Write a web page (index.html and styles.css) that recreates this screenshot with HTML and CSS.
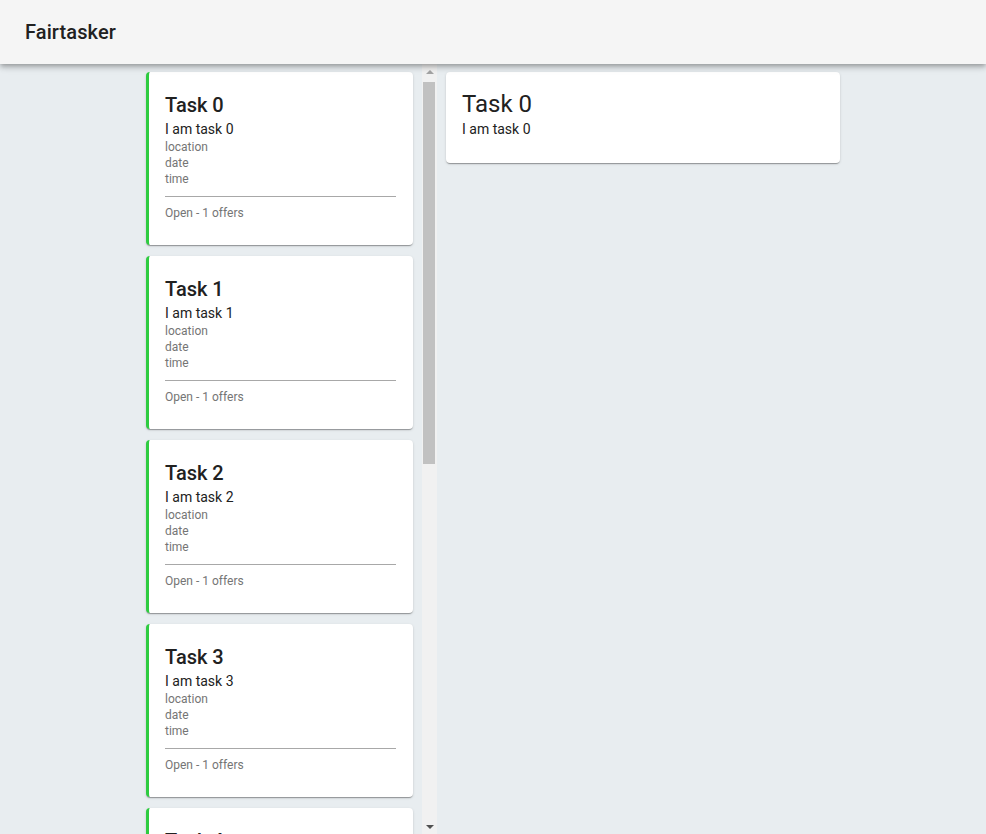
FILE: index.html
```html
<!DOCTYPE html>
<html lang="en">
<head>
  <meta charset="UTF-8" />
  <meta name="viewport" content="width=device-width, initial-scale=1.0" />
  <title>Fairtasker</title>
  <link rel="stylesheet" href="styles.css">
</head>
<body>

<header class="toolbar">
  <span class="brand">Fairtasker</span>
</header>

<main class="layout">
  <div class="list-pane">
    <div class="task-list" id="taskList"></div>
    <div class="scrollbar">
      <div class="scroll-arrow up"></div>
      <div class="scroll-track">
        <div class="scroll-thumb"></div>
      </div>
      <div class="scroll-arrow down"></div>
    </div>
  </div>

  <div class="detail-card">
    <div class="detail-title">Task 0</div>
    <div class="detail-desc">I am task 0</div>
  </div>
</main>

<script>
const list = document.getElementById("taskList");

for (let i = 0; i < 8; i++) {
  const card = document.createElement("div");
  card.className = "task-card";
  card.innerHTML = `
    <div class="task-title">Task ${i}</div>
    <div class="task-desc">I am task ${i}</div>
    <div class="task-meta">location</div>
    <div class="task-meta">date</div>
    <div class="task-meta">time</div>
    <hr class="task-rule">
    <div class="task-status">Open - 1 offers</div>
  `;
  list.appendChild(card);
}
</script>

</body>
</html>
```

FILE: styles.css
```css
html, body {
  height: 100%;
}

body {
  margin: 0;
  font-family: Roboto, "Noto Sans", Arial, sans-serif;
  background-color: #e8edf0;
  color: #212121;
  overflow: hidden;
}

.toolbar {
  height: 64px;
  box-sizing: border-box;
  padding: 0 25px;
  display: flex;
  align-items: center;
  background-color: #f5f5f5;
  box-shadow: 0 2px 4px -1px rgba(0,0,0,.2), 0 4px 5px 0 rgba(0,0,0,.14), 0 1px 10px 0 rgba(0,0,0,.12);
  position: relative;
  z-index: 2;
}

.brand {
  font-size: 20px;
  font-weight: 500;
  letter-spacing: 0.1px;
}

.layout {
  display: flex;
  align-items: flex-start;
  gap: 9px;
  padding-left: 138px;
  height: calc(100% - 64px);
}

.list-pane {
  display: flex;
  height: 100%;
  flex-shrink: 0;
}

.task-list {
  width: 284px;
  height: 100%;
  box-sizing: border-box;
  padding: 8px 9px 0 8px;
  overflow-y: hidden;
}

.scrollbar {
  width: 15px;
  height: 100%;
  background: #f1f1f1;
  display: flex;
  flex-direction: column;
}

.scroll-arrow {
  height: 15px;
  display: flex;
  align-items: center;
  justify-content: center;
}

.scroll-arrow::before {
  content: "";
  border-left: 4px solid transparent;
  border-right: 4px solid transparent;
}

.scroll-arrow.up::before {
  border-bottom: 4px solid #a3a3a3;
}

.scroll-arrow.down::before {
  border-top: 4px solid #505050;
}

.scroll-track {
  flex: 1;
  padding: 3px 2px 0 1px;
}

.scroll-thumb {
  height: 382px;
  background: #c1c1c1;
}

.task-card {
  background: #fff;
  border-left: 3px solid #2ecc40;
  border-radius: 4px;
  box-shadow: 0 2px 1px -1px rgba(0,0,0,.2), 0 1px 1px 0 rgba(0,0,0,.14), 0 1px 3px 0 rgba(0,0,0,.12);
  padding: 19px 17px 20px 16px;
  margin-bottom: 11px;
  height: 173px;
  box-sizing: border-box;
}

.task-title {
  font-size: 20px;
  font-weight: 500;
  line-height: 29px;
}

.task-desc {
  font-size: 14px;
  line-height: 19px;
}

.task-meta,
.task-status {
  font-size: 12px;
  line-height: 16px;
  color: #757575;
}

.task-rule {
  border: none;
  border-top: 1px solid #a8a8a8;
  margin: 9px 0 8px 0;
}

.detail-card {
  width: 394px;
  box-sizing: border-box;
  margin-top: 8px;
  background: #fff;
  border-radius: 4px;
  box-shadow: 0 2px 1px -1px rgba(0,0,0,.2), 0 1px 1px 0 rgba(0,0,0,.14), 0 1px 3px 0 rgba(0,0,0,.12);
  padding: 16px 16px 26px 16px;
  height: 91px;
}

.detail-title {
  font-size: 24px;
  line-height: 32px;
}

.detail-desc {
  font-size: 14px;
  line-height: 18px;
}
```
